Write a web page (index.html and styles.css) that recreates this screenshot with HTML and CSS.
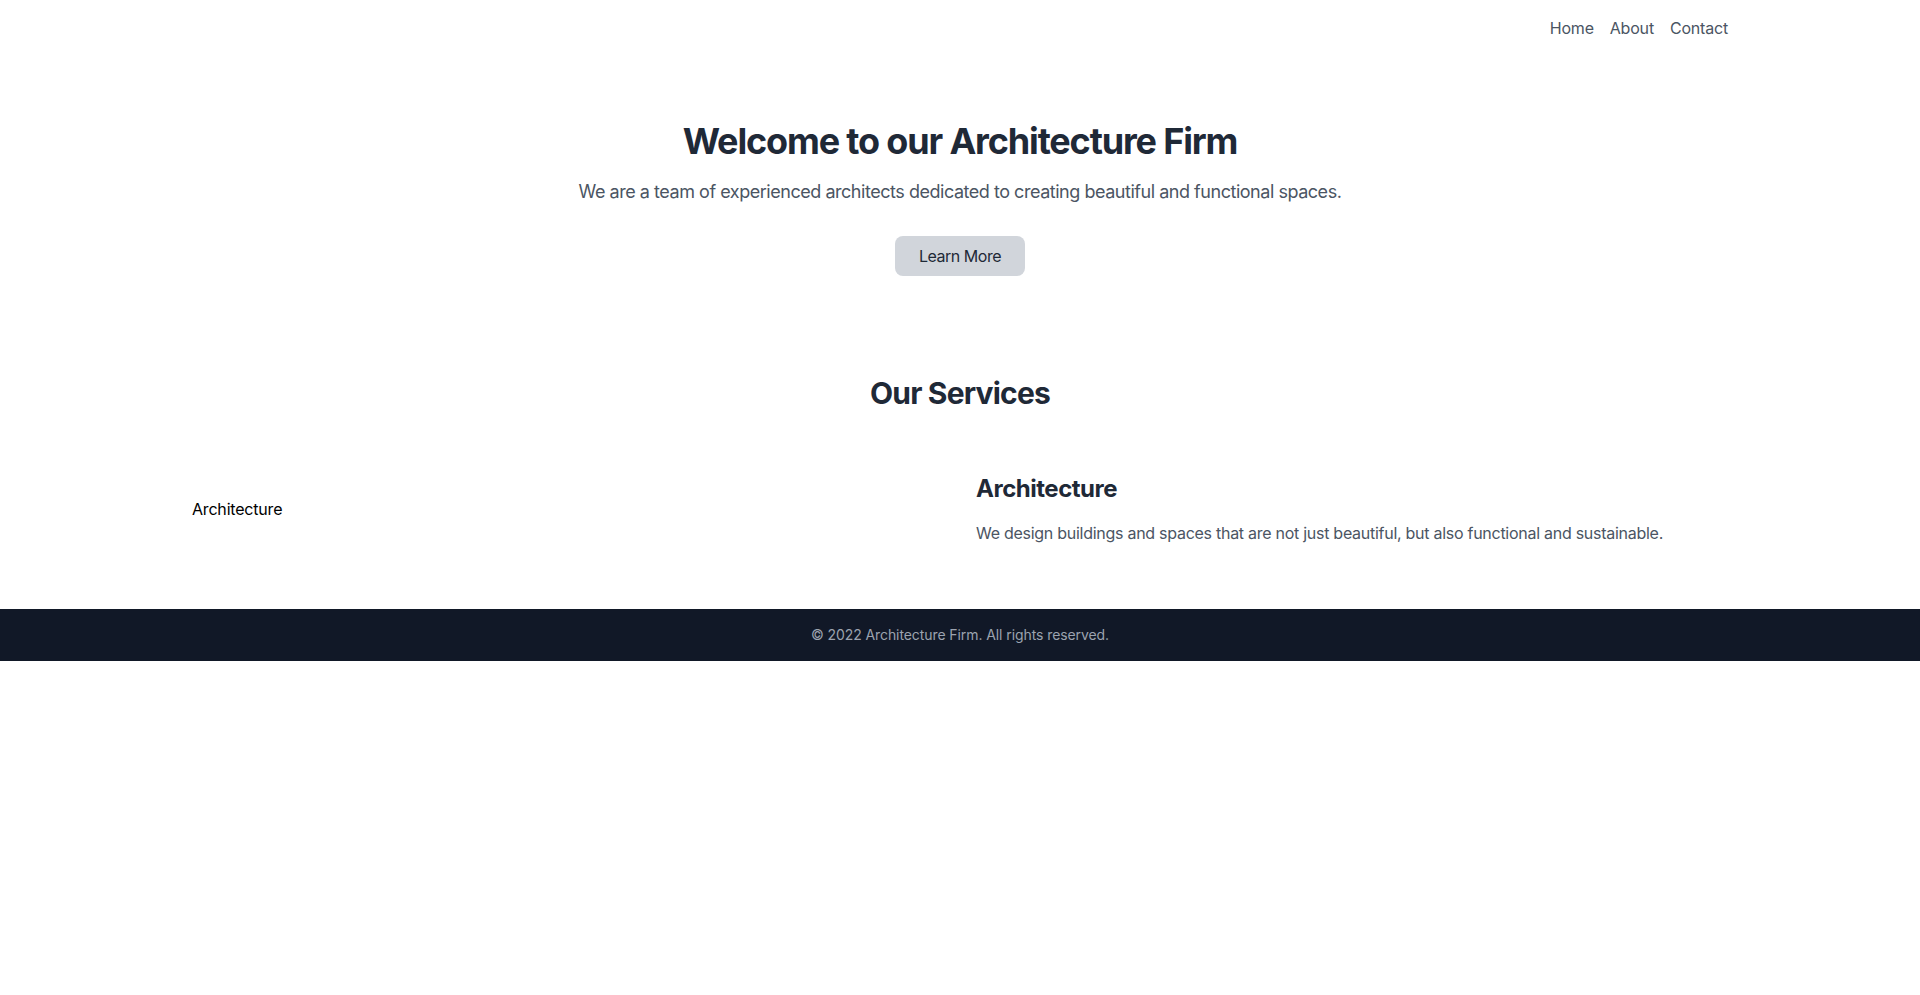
FILE: index.html
```html
<!DOCTYPE html>
<html lang="en">
<head>
<meta charset="utf-8">
<title>Architecture Firm</title>
<link rel="stylesheet" href="styles.css">
</head>
<body>
<header class="header">
  <div class="container header-inner">
    <nav class="nav">
      <a href="#" class="nav-link">Home</a>
      <a href="#" class="nav-link">About</a>
      <a href="#" class="nav-link">Contact</a>
    </nav>
  </div>
</header>
<main>
  <section class="hero">
    <div class="container hero-inner">
      <h1 class="hero-title">Welcome to our Architecture Firm</h1>
      <p class="hero-text">We are a team of experienced architects dedicated to creating beautiful and functional spaces.</p>
      <a href="#" class="btn">Learn More</a>
    </div>
  </section>
  <section class="services">
    <div class="container">
      <h2 class="services-title">Our Services</h2>
      <div class="service-grid">
        <div class="service-media"><span class="alt-text">Architecture</span></div>
        <div class="service-body">
          <h3 class="service-title">Architecture</h3>
          <p class="service-text">We design buildings and spaces that are not just beautiful, but also functional and sustainable.</p>
        </div>
      </div>
    </div>
  </section>
</main>
<footer class="footer">
  <p class="footer-text">© 2022 Architecture Firm. All rights reserved.</p>
</footer>
</body>
</html>
```

FILE: styles.css
```css
* { box-sizing: border-box; margin: 0; padding: 0; }
html, body { background: #ffffff; }
body {
  font-family: Inter, "Noto Sans", "Liberation Sans", sans-serif;
  font-size: 16px;
  line-height: 24px;
  color: #000;
}
a { text-decoration: none; color: inherit; }

.container {
  width: 1536px;
  margin: 0 auto;
}

.header { padding: 16px 0; }
.header-inner { display: flex; justify-content: flex-end; }
.nav { display: flex; gap: 16px; }
.nav-link { color: #4b5563; font-size: 16px; line-height: 24px; letter-spacing: -0.012em; }

.hero { padding: 65px 0 64px; }
.hero-inner { display: flex; flex-direction: column; align-items: center; text-align: center; }
.hero-title {
  font-size: 36px;
  line-height: 40px;
  font-weight: 700;
  color: #1f2937;
  letter-spacing: -0.032em;
  margin-bottom: 17px;
}
.hero-text {
  font-size: 18px;
  line-height: 28px;
  color: #4b5563;
  letter-spacing: -0.026em;
  margin-bottom: 30px;
}
.btn {
  display: inline-block;
  background: #d1d5db;
  color: #1f2937;
  padding: 8px 24px;
  border-radius: 8px;
  font-size: 16px;
  line-height: 24px;
  letter-spacing: -0.03em;
}

.services { padding: 35px 0 64px; }
.services-title {
  text-align: center;
  font-size: 30px;
  line-height: 36px;
  font-weight: 700;
  color: #1f2937;
  letter-spacing: -0.027em;
  margin-bottom: 62px;
}
.service-grid {
  display: grid;
  grid-template-columns: 1fr 1fr;
  gap: 32px;
  align-items: center;
}
.alt-text { color: #000; font-size: 16px; line-height: 24px; letter-spacing: -0.012em; }
.service-title {
  font-size: 24px;
  line-height: 32px;
  font-weight: 700;
  color: #1f2937;
  letter-spacing: -0.02em;
  margin-bottom: 16px;
}
.service-text { color: #4b5563; font-size: 16px; line-height: 24px; letter-spacing: -0.017em; }

.footer {
  background: #111827;
  padding: 16px 0;
  text-align: center;
}
.footer-text { color: #9ca3af; font-size: 14px; line-height: 20px; letter-spacing: -0.006em; }
```
